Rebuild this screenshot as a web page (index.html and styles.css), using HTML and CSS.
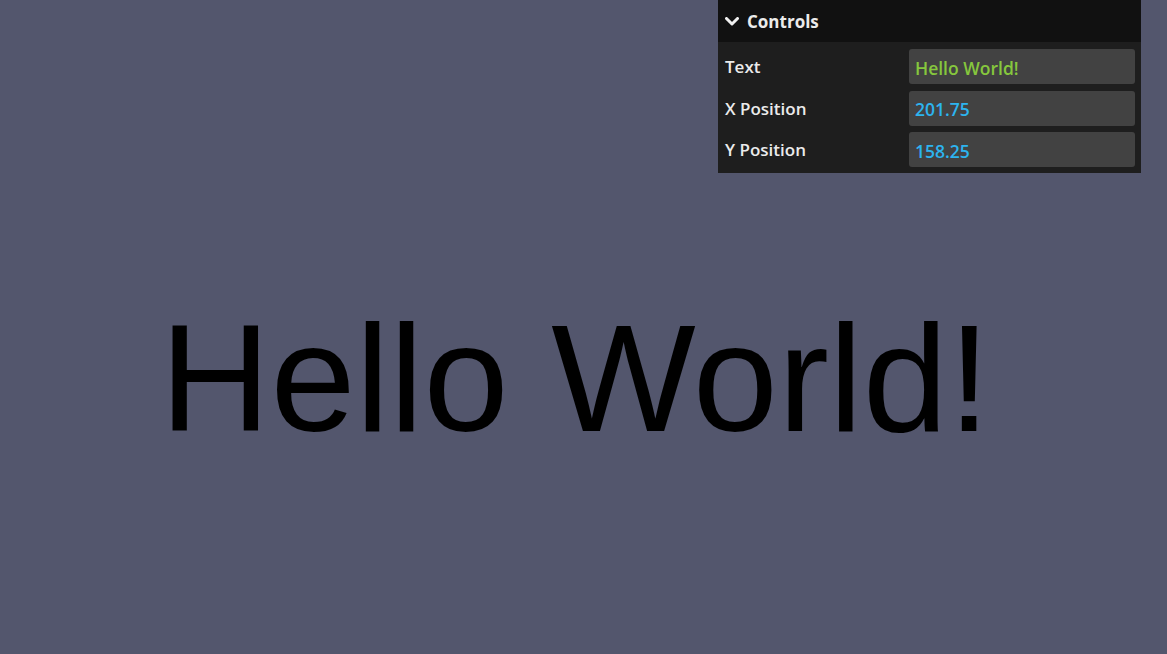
FILE: index.html
```html
<!DOCTYPE html>
<html>
<head>
<meta charset="utf-8">
<link rel="stylesheet" href="styles.css">
</head>
<body>
<main class="stage">
  <div class="canvas-text">Hello World!</div>
  <section class="gui">
    <header class="gui-title">
      <svg class="chev" width="14" height="9" viewBox="0 0 14 9"><path d="M1.5 1.5 L7 7 L12.5 1.5" fill="none" stroke="#f0f0f0" stroke-width="3" stroke-linecap="round" stroke-linejoin="round"/></svg>
      <span>Controls</span>
    </header>
    <div class="gui-body">
      <div class="row"><span class="label">Text</span><div class="field str">Hello World!</div></div>
      <div class="row"><span class="label">X Position</span><div class="field num">201.75</div></div>
      <div class="row"><span class="label">Y Position</span><div class="field num">158.25</div></div>
    </div>
  </section>
</main>
</body>
</html>
```
FILE: styles.css
```css
html, body { margin: 0; padding: 0; }
body { background: #53566d; width: 1167px; height: 654px; overflow: hidden; }
.stage { position: relative; width: 1167px; height: 654px; }
.canvas-text {
  position: absolute; left: 160px; top: 301px;
  font-family: "Liberation Sans", Arial, sans-serif;
  font-size: 153px; line-height: 153px; color: #000; white-space: nowrap;
}
.gui {
  position: absolute; top: 0; right: 26px; width: 423px;
  background: #1e1e1e;
  font-family: "Open Sans", "Noto Sans", sans-serif;
  color: #ebebeb;
}
.gui-title {
  height: 42px; background: #111111; display: flex; align-items: center;
  padding-left: 7px; gap: 8px; font-weight: 700; font-size: 17px;
}
.gui-body { display: flex; flex-direction: column; gap: 6.5px; padding: 7px 6px 6px 7px; }
.row { display: flex; align-items: center; height: 35px; }
.label { width: 184px; font-size: 17px; font-weight: 600; }
.field {
  flex: 1; height: 35px; background: #424242; border-radius: 3px;
  display: flex; align-items: center; padding-left: 6px; padding-top: 2px; box-sizing: border-box;
  font-size: 17.5px; font-weight: 600;
}
.str { color: #86c73d; }
.num { color: #2db4ef; }
```
